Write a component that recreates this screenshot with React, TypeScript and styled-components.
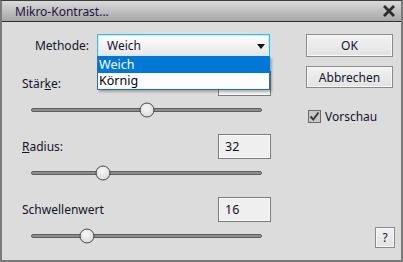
import styled, { createGlobalStyle } from "styled-components";

const GlobalStyle = createGlobalStyle`
  html, body {
    margin: 0;
    padding: 0;
    background: #dcdcdc;
  }
  body {
    font-family: "Noto Sans", "Open Sans", sans-serif;
    font-size: 12px;
    color: #14142a;
  }
`;

type SliderGroup = {
  label: string;
  accessKey?: number;
  value: string;
  position: number;
};

const groups: SliderGroup[] = [
  { label: "Stärke:", accessKey: 4, value: "", position: 0.5 },
  { label: "Radius:", accessKey: 0, value: "32", position: 0.31 },
  { label: "Schwellenwert", value: "16", position: 0.24 },
];

const Window = styled.div`
  width: 403px;
  height: 262px;
  box-sizing: border-box;
  display: flex;
  flex-direction: column;
  overflow: hidden;
  background: #dcdcdc;
  border: 2px solid #7a7a7a;
  border-top: 1px solid #3c3c3c;
`;

const TitleBar = styled.div`
  height: 20px;
  flex-shrink: 0;
  display: flex;
  align-items: center;
  justify-content: space-between;
  padding: 0 7px 0 14px;
  background: linear-gradient(#dadada, #a6a6a6);
  border-bottom: 1px solid #2e2e2e;
  margin: 0 -2px;
  border-left: 1px solid #3c3c3c;
  border-right: 1px solid #3c3c3c;
`;

const Title = styled.span`
  font-size: 12px;
  color: #1d1242;
`;

const CloseIcon = styled.svg`
  width: 12px;
  height: 12px;
  display: block;
`;

const Body = styled.div`
  flex: 1;
  min-height: 0;
  display: flex;
  padding: 12px 6px 12px 20px;
`;

const LeftColumn = styled.div`
  width: 249px;
  display: flex;
  flex-direction: column;
`;

const MethodRow = styled.div`
  position: relative;
  display: flex;
  align-items: center;
  height: 23px;
  margin-bottom: 14px;
  z-index: 2;
`;

const MethodLabel = styled.span`
  width: 67px;
  text-align: right;
  margin-right: 8px;
`;

const SelectBox = styled.div`
  width: 173px;
  height: 23px;
  box-sizing: border-box;
  display: flex;
  align-items: center;
  justify-content: space-between;
  padding: 0 4px 0 9px;
  border: 1px solid #2ec0ef;
  box-shadow: inset 0 0 0 1px #bfeefc;
  background: linear-gradient(#ffffff, #e6e6e6);
`;

const Arrow = styled.span`
  width: 0;
  height: 0;
  border-left: 4px solid transparent;
  border-right: 4px solid transparent;
  border-top: 5px solid #111;
  margin-top: 1px;
`;

const OptionList = styled.div`
  position: absolute;
  left: 75px;
  top: 22px;
  width: 173px;
  box-sizing: border-box;
  border: 1px solid #1f6fc4;
  background: #fff;
  box-shadow: 2px 2px 2px rgba(0, 0, 0, 0.25);
`;

const Option = styled.div<{ $selected?: boolean }>`
  height: 16px;
  line-height: 16px;
  padding-left: 1px;
  font-size: 12.5px;
  background: ${(p) => (p.$selected ? "#0078d7" : "#ffffff")};
  color: ${(p) => (p.$selected ? "#ffffff" : "#000000")};
`;

const Group = styled.div`
  display: flex;
  flex-direction: column;

  & + & {
    margin-top: 16px;
  }
`;

const FieldRow = styled.div`
  display: flex;
  align-items: center;
  justify-content: space-between;
  height: 25px;
`;

const Underlined = styled.span`
  text-decoration: underline;
`;

const ValueBox = styled.div`
  width: 53px;
  height: 25px;
  box-sizing: border-box;
  border: 1px solid #7c7c7c;
  box-shadow: inset 0 0 0 1px #fafafa;
  background: #efefef;
  padding: 3px 0 0 6px;
  font-size: 12.5px;
  color: #101020;
`;

const SliderWrap = styled.div`
  height: 16px;
  margin-top: 6px;
  padding: 0 9px;
  display: flex;
  align-items: center;
`;

const Track = styled.div`
  position: relative;
  flex: 1;
  height: 4px;
  box-sizing: border-box;
  border-radius: 2px;
  background: #8e8e8e;
  border: 1px solid #5e5e5e;
`;

const Thumb = styled.div`
  position: absolute;
  top: 50%;
  width: 15px;
  height: 15px;
  box-sizing: border-box;
  border-radius: 50%;
  border: 1px solid #4a4a4a;
  background: radial-gradient(circle at 45% 35%, #f8f8f8, #d2d2d2);
  transform: translate(-50%, -50%);
`;

const RightColumn = styled.div`
  margin-left: 35px;
  width: 89px;
  display: flex;
  flex-direction: column;
  align-items: flex-start;
`;

const Button = styled.div<{ $height?: number }>`
  width: 87px;
  height: ${(p) => p.$height ?? 23}px;
  box-sizing: border-box;
  display: flex;
  align-items: center;
  justify-content: center;
  border: 1px solid #8a8a8a;
  box-shadow: inset 0 0 0 1px #f8f8f8;
  background: linear-gradient(#f2f2f2, #e2e2e2);
  margin-bottom: 9px;
`;

const CheckRow = styled.div`
  display: flex;
  align-items: center;
  margin-top: 11px;
  margin-left: 2px;
  gap: 4px;
`;

const CheckBox = styled.div`
  width: 13px;
  height: 13px;
  box-sizing: border-box;
  border: 1px solid #6a6a6a;
  background: #c8c8c8;
  display: flex;
  align-items: center;
  justify-content: center;
`;

const HelpButton = styled.div`
  margin-top: auto;
  align-self: flex-end;
  width: 20px;
  height: 21px;
  box-sizing: border-box;
  display: flex;
  align-items: center;
  justify-content: center;
  border: 1px solid #8a8a8a;
  box-shadow: inset 0 0 0 1px #f8f8f8;
  background: linear-gradient(#f2f2f2, #e2e2e2);
`;

const renderLabel = (g: SliderGroup) => {
  if (g.accessKey === undefined) return g.label;
  const i = g.accessKey;
  return (
    <span>
      {g.label.slice(0, i)}
      <Underlined>{g.label[i]}</Underlined>
      {g.label.slice(i + 1)}
    </span>
  );
};

export default function App() {
  return (
    <>
      <GlobalStyle />
      <Window>
        <TitleBar>
          <Title>Mikro-Kontrast...</Title>
          <CloseIcon viewBox="0 0 12 12">
            <path
              d="M2 2 L10 10 M10 2 L2 10"
              stroke="#2c2c2c"
              strokeWidth="2.8"
              strokeLinecap="square"
            />
          </CloseIcon>
        </TitleBar>
        <Body>
          <LeftColumn>
            <MethodRow>
              <MethodLabel>Methode:</MethodLabel>
              <SelectBox>
                <span>Weich</span>
                <Arrow />
              </SelectBox>
              <OptionList>
                <Option $selected>Weich</Option>
                <Option>Körnig</Option>
              </OptionList>
            </MethodRow>
            {groups.map((g) => (
              <Group key={g.label}>
                <FieldRow>
                  {renderLabel(g)}
                  <ValueBox>{g.value}</ValueBox>
                </FieldRow>
                <SliderWrap>
                  <Track>
                    <Thumb style={{ left: `${g.position * 100}%` }} />
                  </Track>
                </SliderWrap>
              </Group>
            ))}
          </LeftColumn>
          <RightColumn>
            <Button>OK</Button>
            <Button $height={22}>Abbrechen</Button>
            <CheckRow>
              <CheckBox>
                <svg width="11" height="11" viewBox="0 0 11 11">
                  <path
                    d="M1.5 5.5 L4.3 8.5 L9.5 1.5"
                    stroke="#3a3a3a"
                    strokeWidth="2"
                    fill="none"
                  />
                </svg>
              </CheckBox>
              <span>Vorschau</span>
            </CheckRow>
            <HelpButton>?</HelpButton>
          </RightColumn>
        </Body>
      </Window>
    </>
  );
}
